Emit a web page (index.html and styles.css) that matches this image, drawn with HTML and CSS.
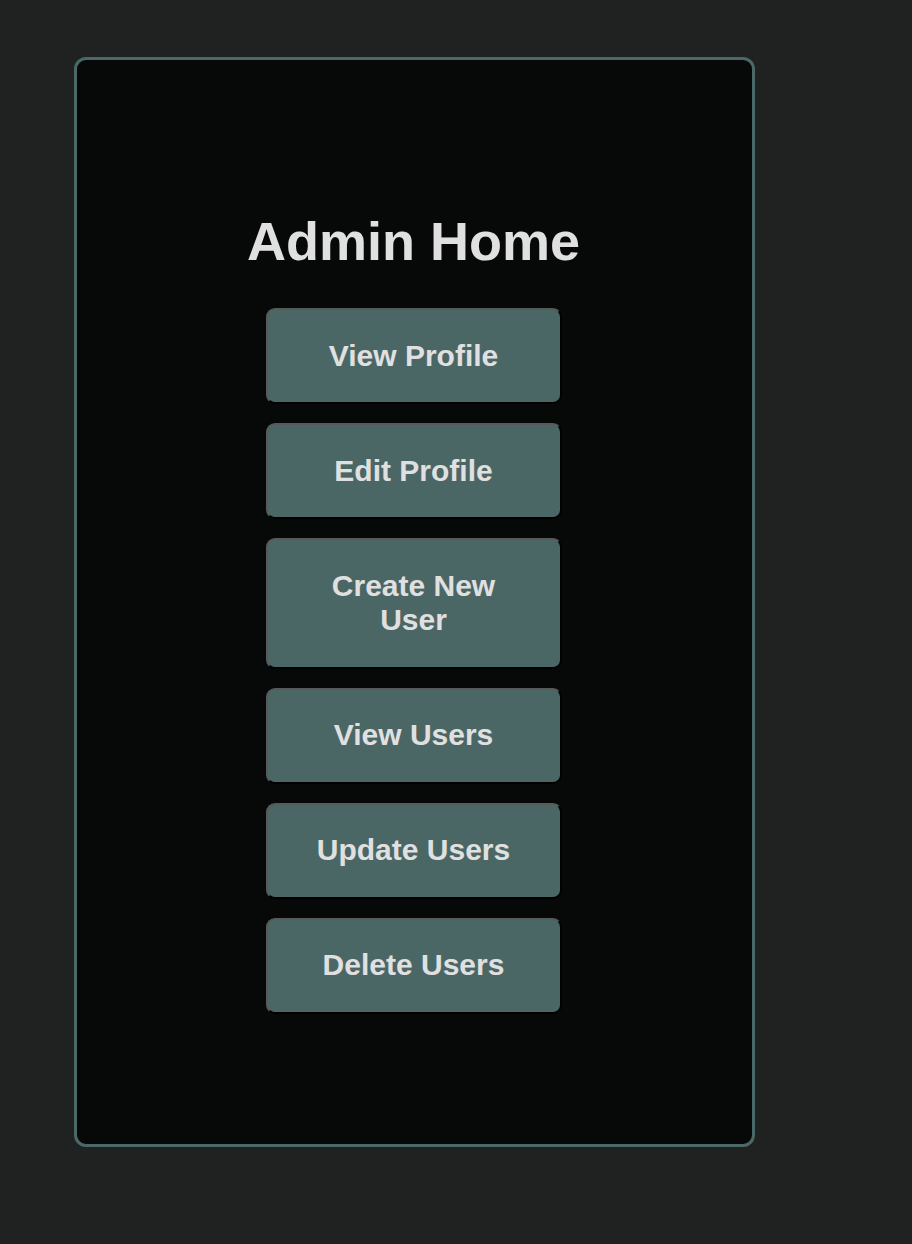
FILE: index.html
```html
<!DOCTYPE html>
<html lang="en">
<head>
<meta charset="utf-8">
<title>Admin Home</title>
<link rel="stylesheet" href="styles.css">
</head>
<body>
<main class="card">
  <h1 class="title">Admin Home</h1>
  <nav class="menu">
    <button class="btn" type="button">View Profile</button>
    <button class="btn" type="button">Edit Profile</button>
    <button class="btn" type="button">Create New User</button>
    <button class="btn" type="button">View Users</button>
    <button class="btn" type="button">Update Users</button>
    <button class="btn" type="button">Delete Users</button>
  </nav>
</main>
</body>
</html>
```
FILE: styles.css
```css
html, body {
  margin: 0;
  padding: 0;
}
body {
  background: #202221;
  font-family: "Liberation Sans", Arial, sans-serif;
  min-height: 1244px;
  padding: 57px 0 0 74px;
  box-sizing: border-box;
}
.card {
  box-sizing: border-box;
  width: 681px;
  height: 1090px;
  background: #070909;
  border: 3px solid #4a6867;
  border-radius: 12px;
  padding-top: 150px;
  padding-right: 2px;
  display: flex;
  flex-direction: column;
  align-items: center;
}
.title {
  margin: 0;
  font-size: 54px;
  line-height: 62px;
  font-weight: 700;
  color: #e0e0e0;
}
.menu {
  margin-top: 36px;
  display: flex;
  flex-direction: column;
  gap: 19px;
}
.btn {
  box-sizing: border-box;
  width: 296px;
  padding: 28.75px 30px;
  background: #4a6766;
  color: #e0e0e0;
  font-family: "Liberation Sans", Arial, sans-serif;
  font-weight: 700;
  font-size: 30px;
  line-height: 34.5px;
  border-style: solid;
  border-width: 2px;
  border-color: #585a5a #000 #000 #585a5a;
  border-radius: 9px;
  text-align: center;
  cursor: pointer;
}
```
